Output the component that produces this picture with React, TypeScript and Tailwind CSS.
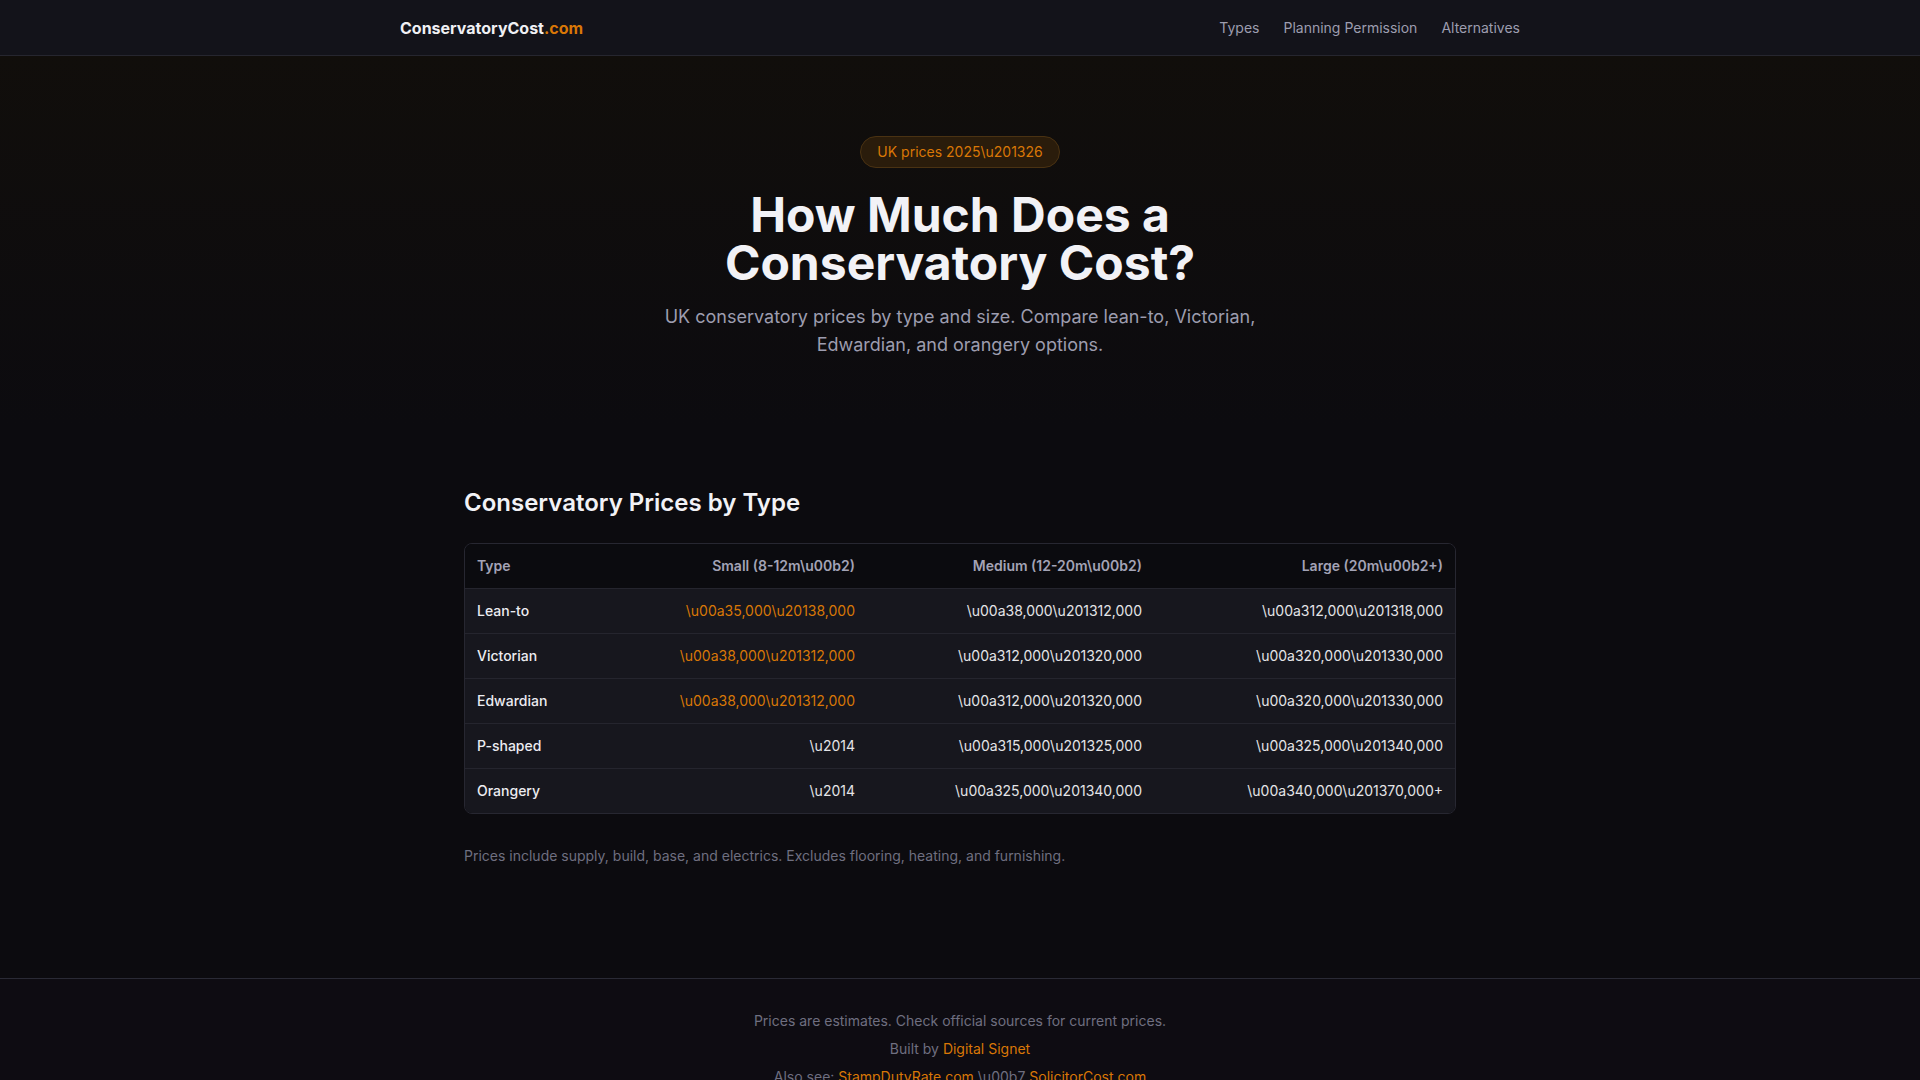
const rows = [
  {
    type: "Lean-to",
    small: "\\u00a35,000\\u20138,000",
    medium: "\\u00a38,000\\u201312,000",
    large: "\\u00a312,000\\u201318,000",
  },
  {
    type: "Victorian",
    small: "\\u00a38,000\\u201312,000",
    medium: "\\u00a312,000\\u201320,000",
    large: "\\u00a320,000\\u201330,000",
  },
  {
    type: "Edwardian",
    small: "\\u00a38,000\\u201312,000",
    medium: "\\u00a312,000\\u201320,000",
    large: "\\u00a320,000\\u201330,000",
  },
  {
    type: "P-shaped",
    small: "\\u2014",
    medium: "\\u00a315,000\\u201325,000",
    large: "\\u00a325,000\\u201340,000",
  },
  {
    type: "Orangery",
    small: "\\u2014",
    medium: "\\u00a325,000\\u201340,000",
    large: "\\u00a340,000\\u201370,000+",
  },
];

const App = () => {
  return (
    <div className="min-h-screen bg-[#0c0b0f] text-[#e4e4e7] font-['Inter',sans-serif]">
      {/* Header */}
      <header className="h-14 bg-[#13131a] border-b border-[#26262f]">
        <div className="max-w-[1120px] mx-auto h-full flex items-center justify-between">
          <a className="text-base font-bold text-[#f0f0f4] pt-px">
            ConservatoryCost<span className="text-[#d97706]">.com</span>
          </a>
          <nav className="flex items-center gap-6 text-sm text-[#9d9daf]">
            <a>Types</a>
            <a>Planning Permission</a>
            <a>Alternatives</a>
          </nav>
        </div>
      </header>

      {/* Hero */}
      <section className="bg-gradient-to-b from-[#110e0b] to-[#0c0b0f] pt-20 pb-16 text-center">
        <span className="inline-block px-4 py-[5px] rounded-full border border-[#4a3212] bg-[#2a1c0b] text-sm text-[#d97706]">
          UK prices 2025\u201326
        </span>
        <h1 className="mt-[23px] text-5xl leading-[1] font-bold text-[#f2f2f6]">
          How Much Does a
          <br />
          Conservatory Cost?
        </h1>
        <p className="mt-4 mx-auto max-w-[620px] text-lg text-[#9d9daf]">
          UK conservatory prices by type and size. Compare lean-to, Victorian,
          Edwardian, and orangery options.
        </p>
      </section>

      {/* Prices table */}
      <section className="max-w-5xl mx-auto px-4 pt-16 pb-28">
        <h2 className="text-2xl font-semibold text-[#f2f2f6] mb-6">
          Conservatory Prices by Type
        </h2>
        <div className="rounded-lg border border-[#272731] overflow-hidden">
          <table className="w-full table-fixed text-sm">
            <colgroup>
              <col className="w-[160px]" />
              <col className="w-[242px]" />
              <col className="w-[287px]" />
              <col />
            </colgroup>
            <thead className="bg-[#0b0b0f]">
              <tr className="text-[#a3a3b6] font-semibold">
                <th className="px-3 py-3 text-left font-semibold">Type</th>
                <th className="px-3 py-3 text-right font-semibold">Small (8-12m\u00b2)</th>
                <th className="px-3 py-3 text-right font-semibold">Medium (12-20m\u00b2)</th>
                <th className="px-3 py-3 text-right font-semibold">Large (20m\u00b2+)</th>
              </tr>
            </thead>
            <tbody className="bg-[#17171e]">
              {rows.map((r) => (
                <tr key={r.type} className="border-t border-[#25252e]">
                  <td className="px-3 py-3 font-medium text-[#ececf1]">{r.type}</td>
                  <td
                    className={
                      r.small === "\\u2014"
                        ? "px-3 py-3 text-right text-[#e4e4e7]"
                        : "px-3 py-3 text-right text-[#d97706]"
                    }
                  >
                    {r.small}
                  </td>
                  <td className="px-3 py-3 text-right text-[#e4e4e7]">{r.medium}</td>
                  <td className="px-3 py-3 text-right text-[#e4e4e7]">{r.large}</td>
                </tr>
              ))}
            </tbody>
          </table>
        </div>
        <p className="mt-8 text-sm text-[#6f6f80]">
          Prices include supply, build, base, and electrics. Excludes flooring, heating, and furnishing.
        </p>
      </section>

      {/* Footer */}
      <footer className="border-t border-[#2a2a35] bg-[#0e0c12] py-8 text-center text-sm text-[#6f6f80]">
        <p>Prices are estimates. Check official sources for current prices.</p>
        <p className="mt-2">
          Built by <a className="text-[#d97706]">Digital Signet</a>
        </p>
        <p className="mt-2">
          Also see: <a className="text-[#d97706]">StampDutyRate.com</a> \u00b7{" "}
          <a className="text-[#d97706]">SolicitorCost.com</a>
        </p>
      </footer>
    </div>
  );
};

export default App;
